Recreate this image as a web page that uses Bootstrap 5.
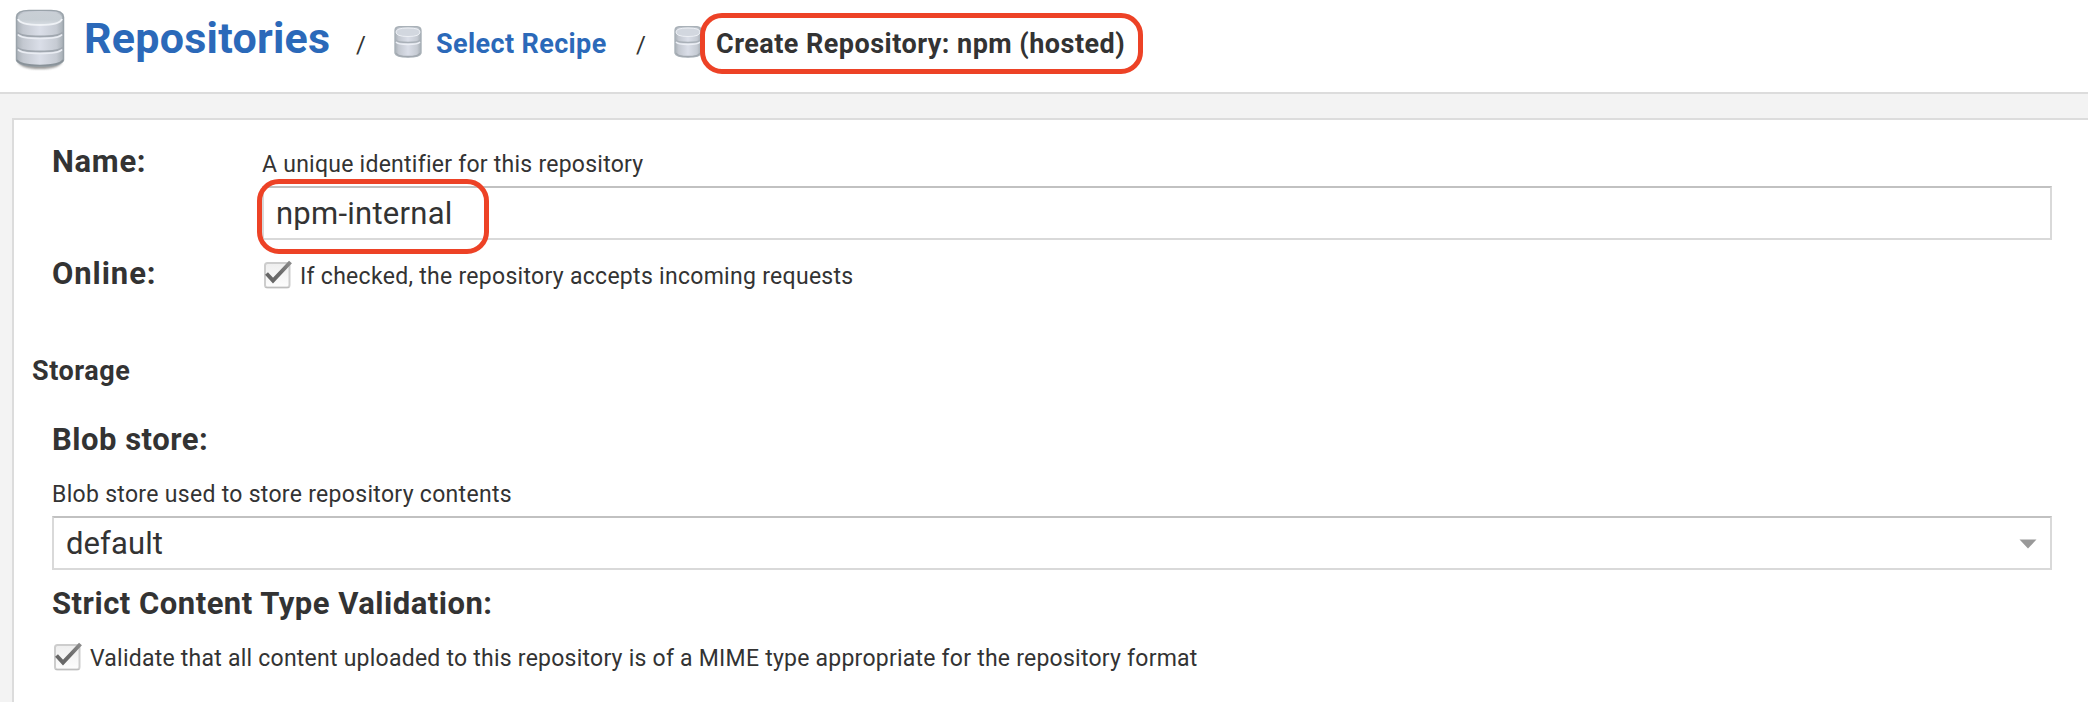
<!DOCTYPE html>
<html lang="en">
<head>
<meta charset="utf-8">
<title>Create Repository: npm (hosted)</title>
<link href="https://cdn.jsdelivr.net/npm/bootstrap@5.3.0/dist/css/bootstrap.min.css" rel="stylesheet">
<style>
  body { font-family: Roboto, "Liberation Sans", sans-serif; font-size: 23px; color: #333; background: #f3f3f3; font-kerning: normal; }
  .topbar { height: 94px; padding: 14px 0 0 15px; border-bottom: 2px solid #dcdcdc; grid-template-columns: 69px 272px 38px 42px 200px 38px 42px auto; align-items: baseline; align-content: start; }
  .topbar svg { align-self: start; overflow: visible; }
  .topbar .db-big { margin-top: -5px; }
  .topbar .db-small { margin-top: 12px; }
  .topbar a { color: #2b69b9; font-weight: 700; text-decoration: none; white-space: nowrap; }
  .page-title { font-size: 43px; line-height: 48px; letter-spacing: .25px; }
  .crumb { font-size: 27px; line-height: 32px; font-weight: 700; letter-spacing: .38px; white-space: nowrap; }
  .crumb-here { letter-spacing: .47px; }
  .slash { font-size: 24px; line-height: 30px; }
  .callout-ring { border: 5px solid #ed4226; border-radius: 22px; pointer-events: none; }
  .ring-title { left: 700px; top: 13px; width: 443px; height: 61px; }
  .ring-name { left: -5px; top: -7px; width: 232px; height: 75px; }
  .panel { margin: 24px 0 0 12px; border: solid #dcdcdc; border-width: 2px 0 0 2px; padding: 30px 36px 0 38px; }
  .label-col { width: 210px; flex: none; }
  .field-label { font-size: 31px; line-height: 36px; font-weight: 700; letter-spacing: .5px; }
  .label-name { line-height: 24px; letter-spacing: .7px; }
  .label-online { line-height: 32px; letter-spacing: .92px; }
  .help { line-height: 29px; letter-spacing: .25px; margin-bottom: 7px; }
  .help-wide { letter-spacing: .3px; }
  .field, .field:focus { height: 54px; padding: 0 12px; font-size: 31px; line-height: 50px; color: #333; background-color: #fff; border: 2px solid #d9d9d9; border-top-color: #c1c1c1; border-radius: 0; letter-spacing: .25px; box-shadow: none; }
  select.field { letter-spacing: .1px; padding-top: 1px; background-image: url("data:image/svg+xml,%3Csvg xmlns='http://www.w3.org/2000/svg' viewBox='0 0 18 10'%3E%3Cpath d='M.5.5h17L9 9.5z' fill='%23999'/%3E%3C/svg%3E"); background-size: 18px 10px; background-position: right 13px top 21px; }
  .check-line { line-height: 37px; letter-spacing: .29px; padding-left: 2px; white-space: nowrap; }
  .check-line svg { flex: none; margin-right: 6px; }
  .check-line-wide { letter-spacing: .235px; }
  .row-online { margin-top: 18px; }
  .section-title { font-size: 27px; line-height: 32px; font-weight: 700; letter-spacing: .55px; margin: 60px 0 35px -20px; }
  .gap-help { margin-top: 22px; }
  .gap-label { margin-top: 16px; }
  .gap-check { margin-top: 18px; }
</style>
</head>
<body class="vh-100 overflow-hidden d-flex flex-column">
<svg width="0" height="0" class="position-absolute" aria-hidden="true">
  <defs>
    <linearGradient id="side"><stop offset="0" stop-color="#a9b0b7"/><stop offset=".14" stop-color="#c3c8d0"/><stop offset=".5" stop-color="#dadee8"/><stop offset=".85" stop-color="#c6cbd3"/><stop offset="1" stop-color="#a6aeb5"/></linearGradient>
    <linearGradient id="lid" x2="0" y2="1"><stop offset="0" stop-color="#c9cfd5"/><stop offset=".6" stop-color="#c7ced4"/><stop offset="1" stop-color="#d8dde3"/></linearGradient>
    <linearGradient id="box" x2="0" y2="1"><stop offset="0" stop-color="#eee"/><stop offset="1" stop-color="#fdfdfd"/></linearGradient>
    <linearGradient id="tick" x1="0" y1="1" x2="1" y2="0"><stop offset="0" stop-color="#666"/><stop offset=".5" stop-color="#6c6c6c"/><stop offset="1" stop-color="#8c8c8c"/></linearGradient>
    <filter id="soft" x="-20%" y="-50%" width="140%" height="200%"><feGaussianBlur stdDeviation="1.3"/></filter>
    <symbol id="check" viewBox="0 0 30 34">
      <rect x="1" y="5" width="24.5" height="24.5" rx="2.5" fill="url(#box)" stroke="#cdcdcd" stroke-width="2"/>
      <path d="M1.500 29.500h23.500" stroke="#bdbdbd" stroke-width="1"/>
      <path d="M2.500 15.500 9 22.500 26.500 4" fill="none" stroke="url(#tick)" stroke-width="4"/>
    </symbol>
    <symbol id="db2" viewBox="0 0 28 32">
      <path d="M1 5Q1 1 5 .8H23Q27 1 27 5V27Q26 31 14 31T1 27Z" fill="url(#side)" stroke="#a9b1b8" stroke-width="1.400"/>
      <path d="M2 6q0-4 12-4t12 4q0 4.500-12 4.500T2 6z" fill="#d2d7df" stroke="#edf0f5" stroke-width="1"/>
      <path d="M1.500 14q2 2.500 12.500 2.500t12.500-2.500" fill="none" stroke="#a9b0b8" stroke-width="1.400"/>
      <path d="M2 16q2 2.500 12 2.500t12-2.500" fill="none" stroke="#eceff5" stroke-width="1.400"/>
      <path d="M2 27q2 3.500 12 3.500T26 27" fill="none" stroke="#a0a7ae" stroke-width="1.300"/>
    </symbol>
  </defs>
</svg>

<header class="topbar d-grid bg-white position-relative flex-shrink-0">
  <svg class="db-big" width="50" height="60" viewBox="0 0 50 60">
    <path d="M3 53Q6 60 25 60T47 53Z" fill="#555" opacity=".6" filter="url(#soft)"/>
    <path d="M1.500 8Q2 1.500 14 1.500H36Q48 1.500 48.500 8V51Q47 57 25 57T1.500 51Z" fill="url(#side)" stroke="#9aa3aa" stroke-width="1.500"/>
    <path d="M3 9Q3 2.500 25 2.500T47 9Q46 16 25 16T3 9Z" fill="url(#lid)"/>
    <path d="M3 10Q5 16 25 16T47 10" fill="none" stroke="#eff2f6" stroke-width="2"/>
    <path d="M2 23Q5 27.500 25 27.500T48 23M2 38Q5 42.500 25 42.500T48 38" fill="none" stroke="#a0a7af" stroke-width="1.800"/>
    <path d="M3 25.500Q6 29.500 25 29.500T47 25.500M3 40.500Q6 44.500 25 44.500T47 40.500" fill="none" stroke="#eaedf3" stroke-width="1.700"/>
    <path d="M2 51Q5 56.500 25 56.500T48 51" fill="none" stroke="#899299" stroke-width="1.700"/>
  </svg>
  <a href="#" class="page-title">Repositories</a>
  <span class="slash">/</span>
  <svg class="db-small" width="28" height="32"><use href="#db2"/></svg>
  <a href="#" class="crumb">Select Recipe</a>
  <span class="slash">/</span>
  <svg class="db-small" width="28" height="32"><use href="#db2"/></svg>
  <span class="crumb crumb-here">Create Repository: npm (hosted)</span>
  <div class="callout-ring ring-title position-absolute"></div>
</header>

<main class="panel bg-white flex-grow-1">
  <div class="d-flex">
    <label class="label-col field-label label-name" for="repo-name">Name:</label>
    <div class="flex-grow-1">
      <div class="help">A unique identifier for this repository</div>
      <div class="position-relative">
        <input id="repo-name" type="text" class="form-control field" value="npm-internal">
        <div class="callout-ring ring-name position-absolute"></div>
      </div>
    </div>
  </div>
  <div class="d-flex row-online">
    <div class="label-col field-label label-online">Online:</div>
    <div class="check-line d-flex"><svg width="30" height="34"><use href="#check"/></svg>If checked, the repository accepts incoming requests</div>
  </div>

  <div class="section-title">Storage</div>

  <div class="field-label">Blob store:</div>
  <div class="help help-wide gap-help">Blob store used to store repository contents</div>
  <select class="form-select field" aria-label="Blob store"><option>default</option></select>
  <div class="field-label gap-label">Strict Content Type Validation:</div>
  <div class="check-line check-line-wide d-flex gap-check"><svg width="30" height="34"><use href="#check"/></svg>Validate that all content uploaded to this repository is of a MIME type appropriate for the repository format</div>
</main>
<script src="https://cdn.jsdelivr.net/npm/bootstrap@5.3.0/dist/js/bootstrap.bundle.min.js"></script>
</body>
</html>
